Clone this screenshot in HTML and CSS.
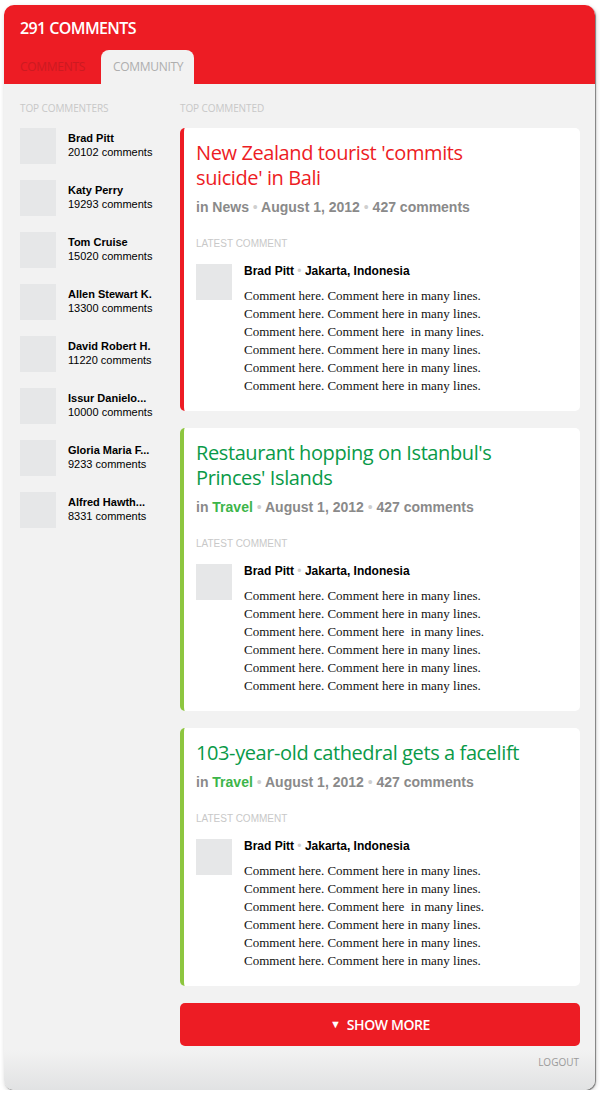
FILE: index.html
```html
<!DOCTYPE html>
<html>
<head>
<meta charset="utf-8">
<link rel="stylesheet" href="styles.css">
</head>
<body>
<div class="panel">
  <header class="head">
    <h1 class="head-title">291 COMMENTS</h1>
    <nav class="tabs">
      <span class="tab">COMMENTS</span>
      <span class="tab tab-active">COMMUNITY</span>
    </nav>
  </header>
  <div class="body">
    <aside class="side">
      <div class="label">TOP COMMENTERS</div>
      <ul class="people">
        <li class="person"><span class="ava"></span><div class="pinfo"><b>Brad Pitt</b><span>20102 comments</span></div></li>
        <li class="person"><span class="ava"></span><div class="pinfo"><b>Katy Perry</b><span>19293 comments</span></div></li>
        <li class="person"><span class="ava"></span><div class="pinfo"><b>Tom Cruise</b><span>15020 comments</span></div></li>
        <li class="person"><span class="ava"></span><div class="pinfo"><b>Allen Stewart K.</b><span>13300 comments</span></div></li>
        <li class="person"><span class="ava"></span><div class="pinfo"><b>David Robert H.</b><span>11220 comments</span></div></li>
        <li class="person"><span class="ava"></span><div class="pinfo"><b>Issur Danielo...</b><span>10000 comments</span></div></li>
        <li class="person"><span class="ava"></span><div class="pinfo"><b>Gloria Maria F...</b><span>9233 comments</span></div></li>
        <li class="person"><span class="ava"></span><div class="pinfo"><b>Alfred Hawth...</b><span>8331 comments</span></div></li>
      </ul>
    </aside>
    <main class="main">
      <div class="label">TOP COMMENTED</div>
      <article class="card card-news">
        <h2 class="card-title">New Zealand tourist 'commits<br>suicide' in Bali</h2>
        <div class="meta">in <span class="cat">News</span> <i>•</i> August 1, 2012 <i>•</i> 427 comments</div>
        <div class="latest">LATEST COMMENT</div>
        <div class="comment">
          <span class="ava"></span>
          <div class="ctext">
            <div class="cname">Brad Pitt <i>•</i> Jakarta, Indonesia</div>
            <p class="cbody">Comment here. Comment here in many lines.<br>Comment here. Comment here in many lines.<br>Comment here. Comment here&nbsp; in many lines.<br>Comment here. Comment here in many lines.<br>Comment here. Comment here in many lines.<br>Comment here. Comment here in many lines.</p>
          </div>
        </div>
      </article>
      <article class="card card-travel">
        <h2 class="card-title">Restaurant hopping on Istanbul's<br>Princes' Islands</h2>
        <div class="meta">in <span class="cat">Travel</span> <i>•</i> August 1, 2012 <i>•</i> 427 comments</div>
        <div class="latest">LATEST COMMENT</div>
        <div class="comment">
          <span class="ava"></span>
          <div class="ctext">
            <div class="cname">Brad Pitt <i>•</i> Jakarta, Indonesia</div>
            <p class="cbody">Comment here. Comment here in many lines.<br>Comment here. Comment here in many lines.<br>Comment here. Comment here&nbsp; in many lines.<br>Comment here. Comment here in many lines.<br>Comment here. Comment here in many lines.<br>Comment here. Comment here in many lines.</p>
          </div>
        </div>
      </article>
      <article class="card card-travel">
        <h2 class="card-title">103-year-old cathedral gets a facelift</h2>
        <div class="meta">in <span class="cat">Travel</span> <i>•</i> August 1, 2012 <i>•</i> 427 comments</div>
        <div class="latest">LATEST COMMENT</div>
        <div class="comment">
          <span class="ava"></span>
          <div class="ctext">
            <div class="cname">Brad Pitt <i>•</i> Jakarta, Indonesia</div>
            <p class="cbody">Comment here. Comment here in many lines.<br>Comment here. Comment here in many lines.<br>Comment here. Comment here&nbsp; in many lines.<br>Comment here. Comment here in many lines.<br>Comment here. Comment here in many lines.<br>Comment here. Comment here in many lines.</p>
          </div>
        </div>
      </article>
      <button class="more"><span class="tri">▼</span> SHOW MORE</button>
      <div class="logout">LOGOUT</div>
    </main>
  </div>
</div>
</body>
</html>
```

FILE: styles.css
```css
* { box-sizing: border-box; }
html, body { margin: 0; padding: 0; background: #fff; }
body { font-family: "Liberation Sans", Arial, sans-serif; }

.panel {
  margin: 5px 0 0 4px;
  width: 591px;
  height: 1085px;
  border-radius: 10px;
  overflow: hidden;
  background: linear-gradient(to bottom, #f2f2f2 0, #f2f2f2 1045px, #e1e2e3 1085px);
  box-shadow: 1px 1px 1px rgba(0,0,0,0.45), 1px 2px 5px rgba(0,0,0,0.2);
}

.head {
  background: #ed1c24;
  height: 79px;
  display: flex;
  flex-direction: column;
  justify-content: space-between;
}
.head-title {
  margin: 0;
  padding: 12px 0 0 16px;
  font-family: "Open Sans", sans-serif;
  font-weight: 600;
  font-size: 16px;
  line-height: 22px;
  color: #fff;
  letter-spacing: -0.6px;
}
.tabs { display: flex; align-items: flex-end; padding-left: 16px; gap: 16px; }
.tab {
  font-family: "Open Sans", sans-serif;
  font-size: 12px;
  line-height: 34px;
  height: 34px;
  color: #cc1a21;
  letter-spacing: -0.3px;
}
.tab-active {
  background: #f2f2f2;
  color: #aeaeae;
  padding: 0 11px 0 12px;
  border-radius: 8px 8px 0 0;
}

.body { display: flex; padding: 17px 15px 0 16px; }
.side { width: 160px; flex: none; }
.main { flex: 1; }

.label {
  font-family: "Open Sans", sans-serif;
  font-size: 10px;
  line-height: 14px;
  color: #c8c8c8;
  margin-bottom: 13px;
  letter-spacing: -0.1px;
}

.people { list-style: none; margin: 0; padding: 0; display: flex; flex-direction: column; gap: 16px; }
.person { display: flex; gap: 12px; }
.ava { width: 36px; height: 36px; background: #e6e7e8; flex: none; display: block; }
.pinfo { display: flex; flex-direction: column; font-size: 11px; line-height: 14px; color: #000; padding-top: 3px; }
.pinfo b { font-weight: 700; }

.card {
  background: #fff;
  border-left: 4px solid #ed1c24;
  border-radius: 5px;
  padding: 12px 16px 16px 12px;
  margin-bottom: 17px;
}
.card-travel { border-left-color: #8dc63f; }
.card-title {
  margin: 0;
  font-family: "Open Sans", sans-serif;
  font-weight: 400;
  font-size: 20px;
  line-height: 25px;
  color: #ed1c24;
  letter-spacing: -0.4px;
}
.card-travel .card-title { color: #0a9a48; }
.meta {
  margin-top: 8px;
  font-size: 14px;
  line-height: 18px;
  font-weight: 700;
  color: #8a8a8a;
}
.meta i, .cname i { font-style: normal; color: #cfcfcf; font-weight: 400; }
.card-travel .cat { color: #3db54a; }
.latest {
  margin-top: 22px;
  font-size: 10px;
  line-height: 12px;
  color: #c8c8c8;
}
.comment { display: flex; gap: 12px; margin-top: 14px; }
.ctext { margin-top: -1px; }
.cname { font-size: 12px; line-height: 16px; font-weight: 700; color: #000; }
.cbody {
  margin: 8px 0 0;
  font-family: "Liberation Serif", "Times New Roman", serif;
  font-size: 13px;
  line-height: 18px;
  color: #111;
}

.more {
  display: block;
  width: 100%;
  height: 43px;
  margin-top: 1px;
  border: 0;
  border-radius: 5px;
  background: #ed1c24;
  color: #fff;
  font-family: "Open Sans", sans-serif;
  font-weight: 600;
  font-size: 14px;
  letter-spacing: -0.4px;
  padding: 0;
  cursor: pointer;
}
.tri { font-size: 11px; position: relative; top: -2px; margin-right: 3px; }
.logout {
  text-align: right;
  font-family: "Open Sans", sans-serif;
  font-size: 10px;
  line-height: 14px;
  color: #9a9a9a;
  margin-top: 9px;
  padding-right: 1px;
}
```
